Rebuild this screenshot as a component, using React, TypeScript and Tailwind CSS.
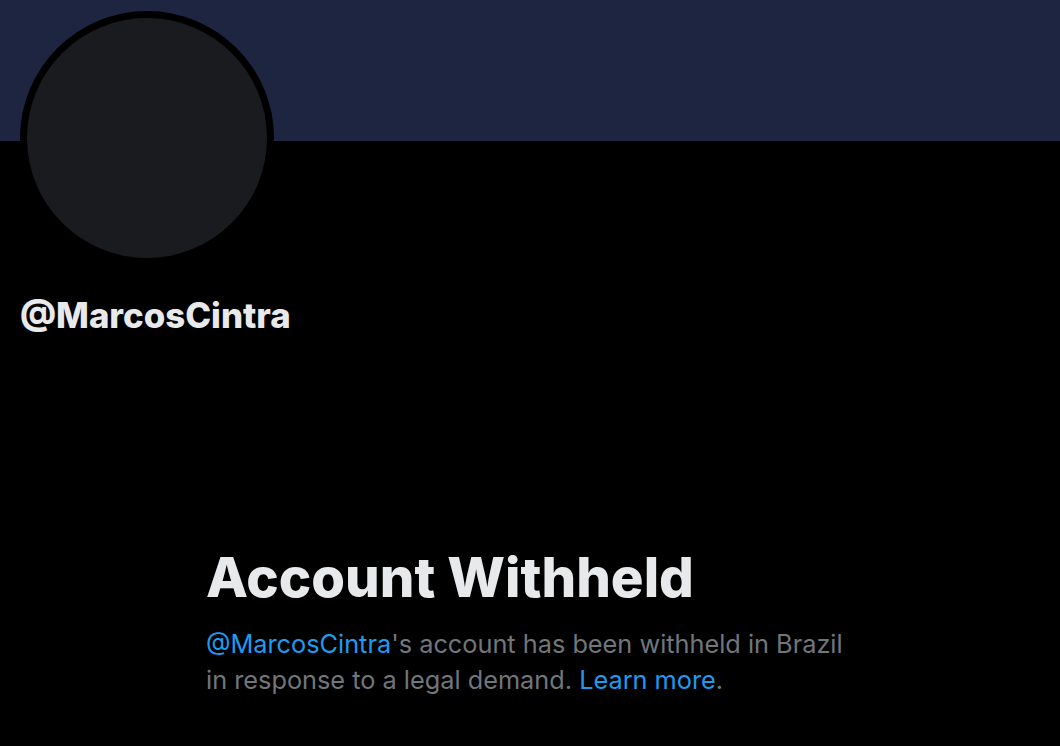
import React from "react";

export default function App() {
  return (
    <div className="w-[1060px] h-[746px] bg-black overflow-hidden relative" style={{ fontFamily: "Inter, 'Liberation Sans', sans-serif" }}>
      <div className="h-[141px] bg-[#1e2540]" />
      <div className="absolute left-[20px] top-[11px] w-[254px] h-[254px] rounded-full bg-black p-[7px]">
        <div className="w-full h-full rounded-full bg-[#1a1b1e]" />
      </div>
      <div className="pl-[20px] pt-[156px]">
        <div className="text-[34.8px] font-extrabold text-[#e7e9ea] leading-[36px]">@MarcosCintra</div>
      </div>
      <div className="pl-[206px] pt-[212px]">
        <div className="text-[54.6px] font-extrabold text-[#e7e9ea] leading-[64px]">Account Withheld</div>
        <div className="mt-[17px] text-[25.3px] leading-[36px] text-[#71767b] w-[700px]">
          <span className="text-[#1d9bf0]">@MarcosCintra</span>'s account has been withheld in Brazil
          <br />
          in response to a legal demand. <span className="text-[#1d9bf0]">Learn more</span>.
        </div>
      </div>
    </div>
  );
}
